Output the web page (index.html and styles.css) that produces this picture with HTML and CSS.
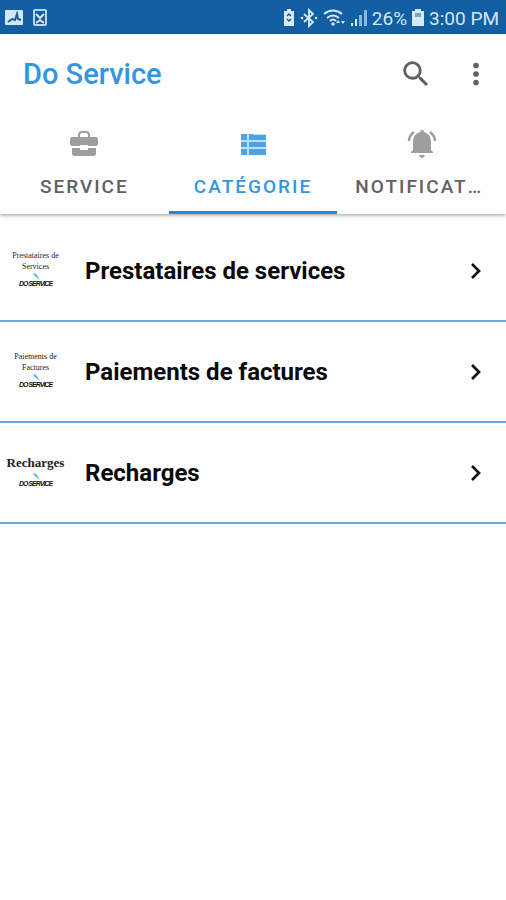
FILE: index.html
```html
<!DOCTYPE html>
<html lang="fr">
<head>
<meta charset="utf-8">
<meta name="viewport" content="width=device-width, initial-scale=1">
<title>Do Service</title>
<link rel="stylesheet" href="styles.css">
</head>
<body>
<div class="status">
  <svg width="20" height="20" viewBox="0 0 20 20"><rect x="1" y="2" width="18" height="15" rx="1" fill="#d3e6f5"/><path d="M4 14l4-3 3 1 2-6 1 5 3 1" fill="none" stroke="#1260a3" stroke-width="2"/></svg>
  <svg width="16" height="20" viewBox="0 0 16 20"><rect x="2" y="2" width="12" height="15" rx="1" fill="none" stroke="#b9d6ed" stroke-width="2"/><path d="M4 6l4 4 4-4M4 15l4-3 4 3" fill="none" stroke="#d3e6f5" stroke-width="2"/></svg>
  <div class="status-right">
    <svg width="14" height="20" viewBox="0 0 14 20"><path d="M5 1h4v2h3v15H2V3h3z" fill="#d9eaf7"/><path d="M5 8l2-2 2 2M5 11l2 2 2-2" fill="none" stroke="#1260a3" stroke-width="1.5"/></svg>
    <svg width="18" height="20" viewBox="0 0 18 20"><path d="M4 6l9 8-4 4V2l4 4-9 8" fill="none" stroke="#d9eaf7" stroke-width="1.8"/><circle cx="2" cy="10" r="1.3" fill="#d9eaf7"/><circle cx="16" cy="10" r="1.3" fill="#d9eaf7"/></svg>
    <svg width="24" height="20" viewBox="0 0 24 20"><path d="M2 6q9-7 18 0M5 10q6-5 12 0M8 13q3-3 6 0" fill="none" stroke="#d9eaf7" stroke-width="2"/><circle cx="11" cy="16" r="1.7" fill="#d9eaf7"/><path d="M16 12l2 3h-4zM21 16l2-3h-4z" fill="#d9eaf7"/></svg>
    <svg width="18" height="20" viewBox="0 0 18 20"><path d="M1 15h2v3H1zM5 11h2v7H5z" fill="#d9eaf7"/><path d="M9 7h3v11H9zM14 2h3v16h-3z" fill="#8ab7dc"/></svg>
    <span>26%</span>
    <svg width="14" height="20" viewBox="0 0 14 20"><path d="M4 1h6v2h3v15H1V3h3z" fill="#d9eaf7"/><path d="M4 5h6v4H4z" fill="#78a8cf"/></svg>
    <span>3:00 PM</span>
  </div>
</div>
<header class="header">
  <div class="appbar">
    <h1>Do Service</h1>
    <button class="icon-button" aria-label="Rechercher"><svg width="34" height="34" viewBox="0 0 24 24"><path fill="#616161" d="M15.500 14h-.79l-.28-.27A6.470 6.470 0 0 0 16 9.500 6.500 6.500 0 1 0 9.500 16c1.610 0 3.090-.59 4.230-1.570l.27.28v.79l5 4.990L20.490 19zm-6 0A4.500 4.500 0 1 1 14 9.500 4.500 4.500 0 0 1 9.500 14z"/></svg></button>
    <button class="icon-button" aria-label="Menu"><svg width="34" height="34" viewBox="0 0 24 24" fill="#616161"><circle cx="12" cy="6" r="2"/><circle cx="12" cy="12" r="2"/><circle cx="12" cy="18" r="2"/></svg></button>
  </div>
  <nav class="tabs">
    <a class="tab" href="#"><svg width="34" height="34" viewBox="0 0 34 34"><path d="M12 11V8q0-3 3-3h4q3 0 3 3v3" fill="none" stroke="#9e9e9e" stroke-width="2"/><path fill="#9e9e9e" d="M5 10h24q2 0 2 2v5q0 2-2 2h-8v-1h-8v1H5q-2 0-2-2v-5q0-2 2-2z"/><path fill="#9e9e9e" d="M5 21h8v2h8v-2h8v6q0 2-2 2H7q-2 0-2-2z"/></svg><span>SERVICE</span></a>
    <a class="tab tab-active" href="#"><svg width="34" height="34" viewBox="0 0 34 34"><path fill="#bfe0f8" d="M5 7h25v21H5z"/><path fill="#4da3e6" d="M5 7h6v6H5zM5 15h6v5H5zM5 22h6v6H5zM13 7h4v6h-4zM13 15h4v5h-4zM13 22h4v6h-4zM17 8h13v5H17zM17 15h13v5H17zM17 22h13v6H17z"/></svg><span>CATÉGORIE</span></a>
    <a class="tab" href="#"><svg width="34" height="34" viewBox="0 0 34 34"><path fill="#9e9e9e" d="M15 5q0-2 2-2t2 2q7 2 7 10v8l2 2v1H6v-1l2-2v-8q0-8 7-10zM14 28h6q-1 3-3 3t-3-3z"/><path d="M9 5q-5 4-5 9M25 5q5 4 5 9" fill="none" stroke="#9e9e9e" stroke-width="2.500"/></svg><span>NOTIFICATIONS</span></a>
  </nav>
</header>
<main class="list">
  <a class="row" href="#">
    <span class="thumb"><span class="thumb-small">Prestataires de<br>Services</span><svg width="10" height="8" viewBox="0 0 10 8"><path d="M2 1l3 1 4 6-5-4z" fill="#35b5e0"/></svg><b>DO SERVICE</b></span>
    <span class="name">Prestataires de services</span>
    <svg width="34" height="34" viewBox="0 0 34 34"><path d="M13 10l7 7-7 7" fill="none" stroke="#111" stroke-width="2.700"/></svg>
  </a>
  <a class="row" href="#">
    <span class="thumb"><span class="thumb-small">Paiements de<br>Factures</span><svg width="10" height="8" viewBox="0 0 10 8"><path d="M2 1l3 1 4 6-5-4z" fill="#35b5e0"/></svg><b>DO SERVICE</b></span>
    <span class="name">Paiements de factures</span>
    <svg width="34" height="34" viewBox="0 0 34 34"><path d="M13 10l7 7-7 7" fill="none" stroke="#111" stroke-width="2.700"/></svg>
  </a>
  <a class="row" href="#">
    <span class="thumb"><span class="thumb-large">Recharges</span><svg width="10" height="8" viewBox="0 0 10 8"><path d="M2 1l3 1 4 6-5-4z" fill="#35b5e0"/></svg><b>DO SERVICE</b></span>
    <span class="name">Recharges</span>
    <svg width="34" height="34" viewBox="0 0 34 34"><path d="M13 10l7 7-7 7" fill="none" stroke="#111" stroke-width="2.700"/></svg>
  </a>
</main>
</body>
</html>
```
FILE: styles.css
```css
* { box-sizing: border-box; }
body {
  margin: 0;
  background: #fefefe;
  font-family: Roboto, "Liberation Sans", sans-serif;
}
svg { display: block; flex: none; }
a { color: inherit; text-decoration: none; }
.status {
  display: flex;
  align-items: center;
  gap: 8px;
  height: 34px;
  padding: 2px 7px 0 4px;
  background: #1260a3;
  color: #d3e6f5;
  font-size: 19px;
}
.status-right {
  display: flex;
  align-items: center;
  gap: 4px;
  margin-left: auto;
}
.header {
  background: #fefefe;
  box-shadow: 0 1px 4px rgba(0, 0, 0, 0.4);
}
.appbar {
  display: flex;
  align-items: center;
  gap: 26px;
  height: 80px;
  padding: 0 13px 0 23px;
}
h1 {
  flex: 1;
  margin: 0;
  color: #3496e0;
  font-size: 29px;
  font-weight: 500;
  line-height: 34px;
}
.icon-button {
  padding: 0;
  border: 0;
  background: none;
}
.tabs {
  display: grid;
  grid-template-columns: repeat(3, minmax(0, 1fr));
}
.tab {
  display: flex;
  flex-direction: column;
  align-items: center;
  gap: 14px;
  height: 100px;
  padding: 13px 18px 0;
  border-bottom: 3px solid transparent;
  color: #616161;
  font-size: 19px;
  font-weight: 500;
  line-height: 24px;
  letter-spacing: 2px;
}
.tab span {
  max-width: 100%;
  overflow: hidden;
  text-overflow: ellipsis;
  white-space: nowrap;
}
.tab-active {
  border-color: #2488d8;
  color: #3496e0;
}
.list { padding-top: 7px; }
.row {
  display: flex;
  align-items: center;
  height: 101px;
  padding-right: 13px;
  border-bottom: 2px solid #70a8d8;
}
.thumb {
  display: flex;
  flex-direction: column;
  align-items: center;
  width: 71px;
  padding-bottom: 4px;
  color: #222;
  font-family: "Liberation Serif", serif;
  text-align: center;
  white-space: nowrap;
}
.thumb-small {
  font-size: 8px;
  line-height: 11px;
}
.thumb-large {
  font-size: 13px;
  font-weight: 700;
  line-height: 18px;
}
.thumb b {
  color: #111;
  font-family: "Liberation Sans", sans-serif;
  font-size: 7px;
  font-style: italic;
  line-height: 8px;
  letter-spacing: -1px;
}
.name {
  flex: 1;
  padding-left: 14px;
  color: #0a0a0a;
  font-size: 24px;
  font-weight: 700;
  line-height: 32px;
}
```
